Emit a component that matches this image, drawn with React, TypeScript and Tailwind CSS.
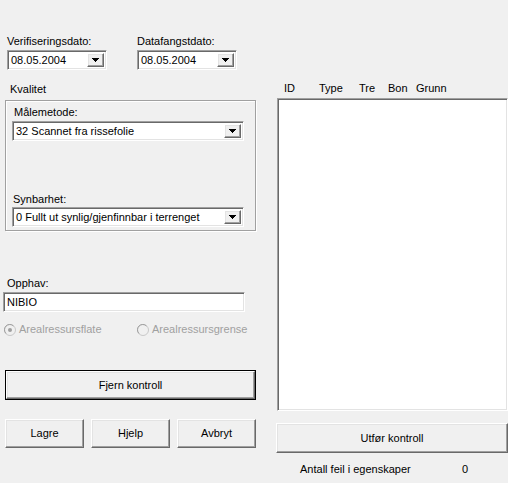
import React from "react";

const raised =
  "border border-t-white border-l-white border-r-[#696969] border-b-[#696969] shadow-[inset_-1px_-1px_0_#a0a0a0,inset_1px_1px_0_#e3e3e3] bg-[#f0f0f0]";
const sunken =
  "border border-t-[#a0a0a0] border-l-[#a0a0a0] border-r-white border-b-white shadow-[inset_1px_1px_0_#696969,inset_-1px_-1px_0_#e3e3e3] bg-white";

function Arrow() {
  return (
    <svg width="7" height="4" viewBox="0 0 7 4">
      <path d="M0 0h7L3.5 4z" fill="#000" shapeRendering="crispEdges" />
    </svg>
  );
}

function Combo({ value, className }: { value: string; className: string }) {
  return (
    <div className={`${sunken} flex items-stretch h-[20px] p-[2px] ${className}`}>
      <div className="flex-1 pl-[1px] leading-[14px] truncate">{value}</div>
      <div className={`${raised} w-[17px] flex items-center justify-center`}>
        <Arrow />
      </div>
    </div>
  );
}

function Radio({ checked, label }: { checked?: boolean; label: string }) {
  return (
    <div className="flex items-center gap-[3px] text-[#a0a0a0]">
      <svg width="12" height="12" viewBox="0 0 12 12">
        <circle cx="6" cy="6" r="5.5" fill="#f0f0f0" stroke="#c8c8c8" />
        <path d="M2 9.5A5 5 0 0 1 9.5 2" fill="none" stroke="#a0a0a0" />
        {checked && <circle cx="6" cy="6" r="2" fill="#a0a0a0" />}
      </svg>
      <span>{label}</span>
    </div>
  );
}

function Button({ label, className }: { label: string; className: string }) {
  return (
    <div className={`${raised} flex items-center justify-center ${className}`}>
      {label}
    </div>
  );
}

export default function App() {
  return (
    <div
      className="w-[508px] h-[483px] bg-[#f0f0f0] text-black text-[11px] leading-[13px] flex overflow-hidden"
      style={{ fontFamily: '"Liberation Sans", Arial, sans-serif' }}
    >
      {/* left column */}
      <div className="w-[276px] flex flex-col">
        <div className="mt-[35px] flex">
          <div className="ml-[7px] w-[129px]">
            <div>Verifiseringsdato:</div>
            <Combo value="08.05.2004" className="mt-[2px] w-[100px]" />
          </div>
          <div className="ml-[1px]">
            <div>Datafangstdato:</div>
            <Combo value="08.05.2004" className="mt-[2px] w-[100px]" />
          </div>
        </div>

        <div className="mt-[13px] ml-[10px]">Kvalitet</div>
        <div className="mt-[4px] ml-[5px] w-[251px] h-[131px] border border-[#a0a0a0] shadow-[inset_1px_1px_0_white,1px_1px_0_white] pl-[6px] pt-[5px]">
          <div className="ml-[2px]">Målemetode:</div>
          <Combo value="32 Scannet fra rissefolie" className="mt-[2px] w-[232px]" />
          <div className="mt-[52px] ml-[1px]">Synbarhet:</div>
          <Combo value="0 Fullt ut synlig/gjenfinnbar i terrenget" className="mt-[1px] w-[232px]" />
        </div>

        <div className="mt-[46px] ml-[7px]">Opphav:</div>
        <div className={`${sunken} mt-[2px] ml-[3px] w-[242px] h-[20px] pl-[3px] leading-[18px]`}>
          NIBIO
        </div>

        <div className="mt-[11px] ml-[4px] flex">
          <div className="w-[133px]">
            <Radio checked label="Arealressursflate" />
          </div>
          <Radio label="Arealressursgrense" />
        </div>

        <div className="mt-[34px] ml-[5px] w-[251px] h-[30px] border border-black">
          <Button label="Fjern kontroll" className="w-full h-full" />
        </div>

        <div className="mt-[19px] ml-[5px] flex gap-[7px]">
          <Button label="Lagre" className="w-[79px] h-[29px]" />
          <Button label="Hjelp" className="w-[79px] h-[29px]" />
          <Button label="Avbryt" className="w-[79px] h-[29px]" />
        </div>
      </div>

      {/* right column */}
      <div className="flex flex-col w-[232px]">
        <div className="mt-[82px] flex">
          <span className="ml-[8px] w-[35px]">ID</span>
          <span className="w-[40px]">Type</span>
          <span className="w-[29px]">Tre</span>
          <span className="w-[28px]">Bon</span>
          <span>Grunn</span>
        </div>
        <div className={`${sunken} mt-[3px] ml-[1px] w-[231px] h-[313px]`} />
        <Button label="Utfør kontroll" className="mt-[12px] w-[232px] h-[30px]" />
        <div className="mt-[10px] flex">
          <span className="ml-[24px] w-[162px]">Antall feil i egenskaper</span>
          <span>0</span>
        </div>
      </div>
    </div>
  );
}
